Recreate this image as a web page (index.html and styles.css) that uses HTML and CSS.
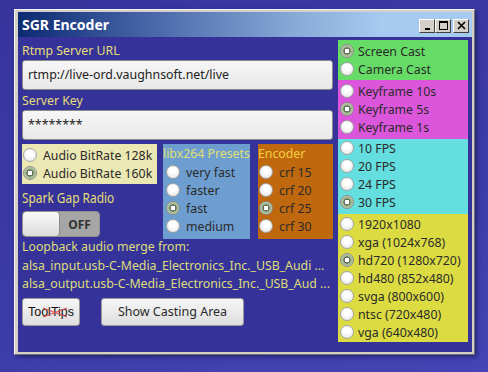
FILE: index.html
```html
<!DOCTYPE html>
<html lang="en">
<head>
    <meta charset="UTF-8">
    <title>SGR Encoder</title>
    <link rel="stylesheet" href="styles.css">
</head>
<body>
    <div class="window">
        <div class="titlebar">
            <span class="title">SGR Encoder</span>
            <div class="wm-buttons">
                <span class="wm-btn"><svg width="13" height="10" viewBox="0 0 13 10"><rect x="4" y="7" width="5" height="2" fill="#000"/></svg></span>
                <span class="wm-btn"><svg width="13" height="10" viewBox="0 0 13 10"><rect x="2.5" y="0.5" width="8" height="8" fill="none" stroke="#000"/><rect x="2" y="0" width="9" height="2" fill="#000"/></svg></span>
                <span class="wm-btn close"><svg width="13" height="10" viewBox="0 0 13 10"><path d="M3 1 L10 8 M10 1 L3 8" stroke="#000" stroke-width="1.6"/></svg></span>
            </div>
        </div>
        <div class="content">
            <div class="left">
                <div class="field-label">Rtmp Server URL</div>
                <div class="input">rtmp://live-ord.vaughnsoft.net/live</div>
                <div class="field-label">Server Key</div>
                <div class="input">********</div>

                <div class="groups">
                    <div class="audio-col">
                        <div class="box audio">
                            <div class="radio"><span class="dot"></span>Audio BitRate 128k</div>
                            <div class="radio checked"><span class="dot"></span>Audio BitRate 160k</div>
                        </div>
                        <div class="field-label spark"><span>Spark Gap Radio</span></div>
                        <div class="toggle"><span class="knob"></span><span class="toggle-text">OFF</span></div>
                    </div>
                    <div class="box presets">
                        <div class="box-title">libx264 Presets</div>
                        <div class="radio"><span class="dot"></span>very fast</div>
                        <div class="radio"><span class="dot"></span>faster</div>
                        <div class="radio checked"><span class="dot"></span>fast</div>
                        <div class="radio"><span class="dot"></span>medium</div>
                    </div>
                    <div class="box encoder">
                        <div class="box-title">Encoder</div>
                        <div class="radio"><span class="dot"></span>crf 15</div>
                        <div class="radio"><span class="dot"></span>crf 20</div>
                        <div class="radio checked"><span class="dot"></span>crf 25</div>
                        <div class="radio"><span class="dot"></span>crf 30</div>
                    </div>
                </div>

                <div class="loopback">
                    <div>Loopback audio merge from:</div>
                    <div>alsa_input.usb-C-Media_Electronics_Inc._USB_Audi ...</div>
                    <div>alsa_output.usb-C-Media_Electronics_Inc._USB_Aud ...</div>
                </div>

                <div class="buttons">
                    <button class="btn tooltips">ToolTips<svg class="cross" width="26" height="11" viewBox="0 0 26 11"><path d="M1 1 L25 10 M25 1 L1 10" stroke="#e05050" stroke-width="1.2"/></svg></button>
                    <button class="btn casting">Show Casting Area</button>
                </div>
            </div>

            <div class="right">
                <div class="box green">
                    <div class="radio checked"><span class="dot"></span>Screen Cast</div>
                    <div class="radio"><span class="dot"></span>Camera Cast</div>
                </div>
                <div class="box magenta">
                    <div class="radio"><span class="dot"></span>Keyframe 10s</div>
                    <div class="radio checked"><span class="dot"></span>Keyframe 5s</div>
                    <div class="radio"><span class="dot"></span>Keyframe 1s</div>
                </div>
                <div class="box cyan">
                    <div class="radio"><span class="dot"></span>10 FPS</div>
                    <div class="radio"><span class="dot"></span>20 FPS</div>
                    <div class="radio"><span class="dot"></span>24 FPS</div>
                    <div class="radio checked"><span class="dot"></span>30 FPS</div>
                </div>
                <div class="box yellow">
                    <div class="radio"><span class="dot"></span>1920x1080</div>
                    <div class="radio"><span class="dot"></span>xga (1024x768)</div>
                    <div class="radio checked"><span class="dot"></span>hd720 (1280x720)</div>
                    <div class="radio"><span class="dot"></span>hd480 (852x480)</div>
                    <div class="radio"><span class="dot"></span>svga (800x600)</div>
                    <div class="radio"><span class="dot"></span>ntsc (720x480)</div>
                    <div class="radio"><span class="dot"></span>vga (640x480)</div>
                </div>
            </div>
        </div>
    </div>
</body>
</html>
```
FILE: styles.css
```css
* { box-sizing: border-box; }
html, body { margin: 0; padding: 0; }
body {
    width: 488px;
    height: 372px;
    overflow: hidden;
    background: linear-gradient(160deg, #37349c 0%, #3c3ca8 60%, #4444b4 100%);
    font-family: "Noto Sans", sans-serif;
    font-size: 12.3px;
    padding: 9px 0 0 14px;
}
.window {
    width: 461px;
    height: 346px;
    border: 1px solid #f4f4f4;
    border-right-color: #707070;
    border-bottom-color: #707070;
    box-shadow: 2px 2px 4px rgba(10, 10, 60, 0.5);
    background: #d4d0c8;
    padding: 2px 2px 2px 3px;
    display: flex;
    flex-direction: column;
}
.titlebar {
    height: 25px;
    background: linear-gradient(90deg, #0c2a72 0%, #4a68aa 30%, #86a8d6 60%, #a6caf0 80%, #a6caf0 100%);
    display: flex;
    align-items: center;
    justify-content: space-between;
    padding: 0 3px 0 4px;
}
.title {
    color: #fff;
    font-weight: bold;
    font-size: 14px;
}
.wm-buttons {
    display: flex;
    margin-top: 2px;
}
.wm-btn {
    width: 16px;
    height: 14px;
    background: #d4d0c8;
    border: 1px solid;
    border-color: #fff #404040 #404040 #fff;
    display: flex;
    align-items: center;
    justify-content: center;
}
.wm-btn.close { margin-left: 2px; }
.content {
    flex: 1;
    background: #353399;
    display: flex;
    padding: 3px 2px 0 4px;
}
.left {
    width: 311px;
    display: flex;
    flex-direction: column;
}
.field-label {
    color: #e6de78;
    height: 18px;
    line-height: 18px;
    margin-top: 2px;
}
.input {
    height: 30px;
    background: linear-gradient(#f6f6f6, #e8e8e8);
    border: 1px solid #8a8a8a;
    border-radius: 3px;
    color: #222;
    font-size: 12.4px;
    line-height: 28px;
    padding-left: 5px;
}
.groups {
    display: flex;
    margin-top: 4px;
    height: 95px;
    align-items: flex-start;
}
.audio-col {
    width: 135px;
    display: flex;
    flex-direction: column;
}
.box {
    color: #2a2a2a;
}
.audio {
    background: #ece8b4;
    padding: 2px 0 2px 1px;
}
.spark {
    font-size: 14.5px;
    margin-top: 3px;
    height: 20px;
    line-height: 20px;
    white-space: nowrap;
}
.spark span {
    display: inline-block;
    transform: scaleX(0.82);
    transform-origin: left center;
}
.toggle {
    margin-top: 4px;
    width: 78px;
    height: 26px;
    background: #a6a6a6;
    border: 1px solid #909090;
    border-radius: 4px;
    display: flex;
    align-items: center;
}
.knob {
    width: 37px;
    height: 24px;
    background: linear-gradient(#fafafa, #dcdcdc);
    border-radius: 4px;
    border-right: 1px solid #8a8a8a;
}
.toggle-text {
    flex: 1;
    text-align: center;
    font-weight: bold;
    font-size: 12px;
    color: #333;
}
.presets {
    margin-left: 6px;
    width: 87px;
    height: 95px;
    background: #6e9ed0;
}
.encoder {
    margin-left: 8px;
    width: 75px;
    height: 95px;
    background: #c0680e;
}
.box-title {
    height: 19px;
    line-height: 19px;
    white-space: nowrap;
}
.presets .box-title { color: #e0e070; }
.encoder .box-title { color: #f2d040; }
.presets .radio { padding-left: 3px; }
.encoder .radio { padding-left: 1px; }
.radio {
    height: 18px;
    display: flex;
    align-items: center;
    white-space: nowrap;
}
.dot {
    width: 14px;
    height: 14px;
    border-radius: 50%;
    border: 1px solid #a4a4a4;
    background: radial-gradient(circle at 50% 35%, #ffffff 30%, #e0e0e0 100%);
    margin-right: 6px;
    flex-shrink: 0;
}
.checked .dot {
    border-color: #8a8a8a;
    background: radial-gradient(circle, #ffffff 0 2.2px, #5a6656 2.6px 3.4px, #a4ba90 3.8px 5.4px, #c8d4bc 5.8px);
}
.loopback {
    margin-top: -1px;
    color: #dede7a;
    line-height: 18.5px;
    white-space: nowrap;
}
.buttons {
    display: flex;
    margin-top: 4px;
}
.btn {
    height: 28px;
    background: linear-gradient(#f6f6f6, #dedede);
    border: 1px solid #9a9a9a;
    border-radius: 3px;
    font-family: "Noto Sans", sans-serif;
    font-size: 12.5px;
    color: #2a2a2a;
    padding: 0;
}
.tooltips {
    width: 58px;
    position: relative;
    font-family: "Liberation Sans", sans-serif;
    font-size: 12.5px;
    color: #111;
}
.cross {
    position: absolute;
    left: 19px;
    top: 8px;
}
.casting {
    width: 143px;
    margin-left: 21px;
}
.right {
    width: 130px;
    margin-left: 5px;
    display: flex;
    flex-direction: column;
}
.right .radio { padding-left: 2px; }
.right .dot { margin-right: 4px; }
.green { background: #66dc66; padding: 2px 0; }
.magenta { background: #dc56dc; padding: 2px 0 3px; }
.cyan { background: #64dede; padding: 0 0 3px; }
.yellow { background: #dcdc42; padding: 1px 0 1px; }
```
